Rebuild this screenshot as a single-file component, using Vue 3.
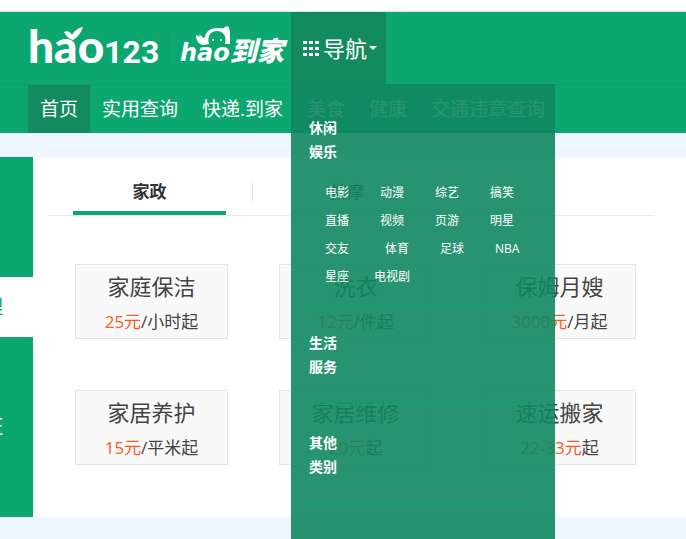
<script setup>
const navItems = ['首页', '实用查询', '快递.到家', '美食', '健康', '交通违章查询']
const cards = [
  { name: '家庭保洁', price: '25元', unit: '/小时起' },
  { name: '洗衣', price: '12元', unit: '/件起' },
  { name: '保姆月嫂', price: '3000元', unit: '/月起' },
  { name: '家居养护', price: '15元', unit: '/平米起' },
  { name: '家居维修', price: '20元', unit: '起' },
  { name: '速运搬家', price: '22-33元', unit: '起' }
]
const side = [
  { label: '', active: false },
  { label: '', active: false },
  { label: '理', active: true },
  { label: '', active: false },
  { label: '证', active: false },
  { label: '', active: false }
]
const groups = [
  {
    title: ['休闲', '娱乐'],
    rows: [
      ['电影', '动漫', '综艺', '搞笑'],
      ['直播', '视频', '页游', '明星'],
      ['交友', '体育', '足球', 'NBA'],
      ['星座', '电视剧']
    ]
  },
  { title: ['生活', '服务'], rows: [] },
  { title: ['其他', '类别'], rows: [] }
]
</script>

<template>
  <div class="page">
    <div class="topline"></div>
    <header class="header">
      <a href="#" class="logo">
        <span class="logo-hao">hao</span><span class="logo-num">123</span>
        <svg class="leaf" viewBox="0 0 20 13" aria-hidden="true">
          <path d="M1 5C4 3 8 5 9 8C11 4 15 1 20 0C18 6 14 11 10 13C6 12 3 9 1 5Z" />
        </svg>
      </a>
      <i class="divider"></i>
      <a href="#" class="daojia">
        <span class="dj-hao">hao</span><span class="dj-cn">到家</span>
        <svg class="mascot" viewBox="0 0 36 20" aria-hidden="true">
          <path d="M9 16C7 8 13 2 21 2C25 2 28 3 29 1L32 0L34 5V18H29C31 10 27 5 21 5C14 5 11 11 13 18L8 19C3 19 0 15 0 9L4 11L3 8L9 13Z" />
          <circle cx="17" cy="14" r="1" /><circle cx="25" cy="14" r="1" />
        </svg>
      </a>
      <div class="menu-wrap">
        <button class="menu-btn" type="button">
          <svg class="grid" viewBox="0 0 16 15" aria-hidden="true">
            <path d="M0 0h4v3H0zM6 0h4v3H6zM12 0h4v3h-4zM0 6h4v3H0zM6 6h4v3H6zM12 6h4v3h-4zM0 12h4v3H0zM6 12h4v3H6zM12 12h4v3h-4z" />
          </svg>
          <span>导航</span>
          <i class="caret"></i>
        </button>
        <div class="dropdown">
          <section v-for="g in groups" :key="g.title[0]" class="group">
            <h3><span v-for="t in g.title" :key="t">{{ t }}</span></h3>
            <div v-if="g.rows.length" class="links">
              <div v-for="(r, i) in g.rows" :key="i" class="row" :class="'row-' + i">
                <a v-for="l in r" :key="l" href="#">{{ l }}</a>
              </div>
            </div>
          </section>
        </div>
      </div>
    </header>
    <nav class="nav">
      <a v-for="(n, i) in navItems" :key="n" href="#" :class="{ active: i === 0 }">{{ n }}</a>
    </nav>
    <main class="main">
      <aside class="side">
        <a v-for="(s, i) in side" :key="i" href="#" :class="{ active: s.active }">{{ s.label }}</a>
      </aside>
      <div class="content">
        <div class="tabs">
          <button type="button" class="tab on">家政</button>
          <i class="sep"></i>
          <button type="button" class="tab">按摩</button>
        </div>
        <div class="cards">
          <a v-for="c in cards" :key="c.name" href="#" class="card">
            <span class="name">{{ c.name }}</span>
            <span class="price"><b>{{ c.price }}</b>{{ c.unit }}</span>
          </a>
        </div>
      </div>
    </main>
  </div>
</template>

<style>
body { background: #eef6ff; overflow: hidden; }
</style>

<style scoped>
.page { font-family: "Open Sans", "Noto Sans CJK SC", sans-serif; overflow: hidden; min-height: 100vh; }
* { box-sizing: border-box; }
a { text-decoration: none; color: inherit; }
button { border: 0; padding: 0; background: none; font: inherit; cursor: pointer; }
i { display: block; }
.topline { height: 12px; background: #fff; border-bottom: 1px solid #dcdfe0; }
.header { height: 72px; background: #0ca770; display: flex; padding-left: 28px; color: #fff; }
.logo { position: relative; width: 129px; height: 72px; display: flex; align-items: baseline; white-space: nowrap; }
.logo-hao { font: 900 46px/68px Lato, sans-serif; }
.logo-num { font: 700 32px/68px Roboto, sans-serif; }
.leaf { position: absolute; left: 35px; top: 15px; width: 20px; height: 13px; fill: #fff; }
.divider { width: 1px; height: 36px; margin: 16px 11px 0; background: #0f9e6b; }
.daojia { position: relative; width: 111px; display: flex; align-items: baseline; white-space: nowrap; }
.dj-hao { font: italic 700 24px/76px "DejaVu Sans", sans-serif; }
.dj-cn { font: italic 900 27px/76px "Noto Sans CJK SC", sans-serif; }
.mascot { position: absolute; left: 16px; top: 14px; width: 36px; height: 20px; fill: #fff; }
.menu-wrap { position: relative; z-index: 2; width: 95px; }
.menu-btn { width: 100%; height: 72px; padding-left: 12px; background: #138a60; color: #fff; display: flex; align-items: center; gap: 2px; font-size: 22px; line-height: 32px; }
.grid { width: 16px; height: 15px; margin-right: 2px; fill: #fff; }
.caret { border: 4px solid transparent; border-top-color: #fff; border-bottom: 0; }
.dropdown { position: absolute; left: 0; top: 72px; width: 264px; height: 600px; padding: 32px 18px 0; background: rgba(17, 135, 96, .9); color: #fff; }
.group { min-height: 100px; border-bottom: 1px solid #0ca770; }
.group + .group { padding-top: 26px; }
.group h3 { margin: 0; display: flex; flex-direction: column; font-size: 14px; line-height: 24px; font-weight: 700; }
.links { padding: 15px 0 13px 16px; }
.row { display: flex; gap: 31px; font-size: 12px; line-height: 28px; white-space: nowrap; }
.row a { min-width: 24px; }
.row-2 a:first-child { padding-right: 5px; }
.row-3 { gap: 25px; }
.nav { height: 49px; border-top: 1px solid #0f9d69; background: #0ca770; display: flex; padding-left: 28px; color: #fff; font-size: 19px; line-height: 48px; white-space: nowrap; }
.nav a { padding: 0 12px; }
.nav .active { background: #138a60; }
.main { margin-top: 24px; height: 360px; display: flex; background: #fff; }
.side { flex: 0 0 33px; overflow: hidden; background: #0ca770; color: #fff; font-size: 20px; }
.side a { display: flex; justify-content: flex-end; height: 60px; line-height: 60px; padding-right: 30px; white-space: nowrap; }
.side .active { background: #fff; color: #0ca770; }
.content { flex: 1; padding: 0 31px 0 14px; }
.tabs { height: 59px; border-bottom: 1px solid #e8e8e8; display: flex; padding-left: 26px; font-size: 17px; }
.tab { width: 153px; padding-top: 12px; border-bottom: 4px solid transparent; color: #333; }
.tab.on { font-weight: 700; border-color: #0ca770; }
.sep { width: 1px; height: 18px; margin: 26px 18px 0 26px; background: #ddd; }
.cards { padding: 48px 19px 0 28px; display: grid; grid-template-columns: repeat(3, 153px); justify-content: space-between; row-gap: 51px; }
.card { height: 75px; padding-top: 5px; background: #f9f9f9; border: 1px solid #e4e4e4; display: flex; flex-direction: column; align-items: center; color: #444; white-space: nowrap; }
.name { font-size: 22px; line-height: 32px; }
.price { font-size: 17px; line-height: 40px; }
.price b { font-weight: 400; color: #ff5722; }
</style>
